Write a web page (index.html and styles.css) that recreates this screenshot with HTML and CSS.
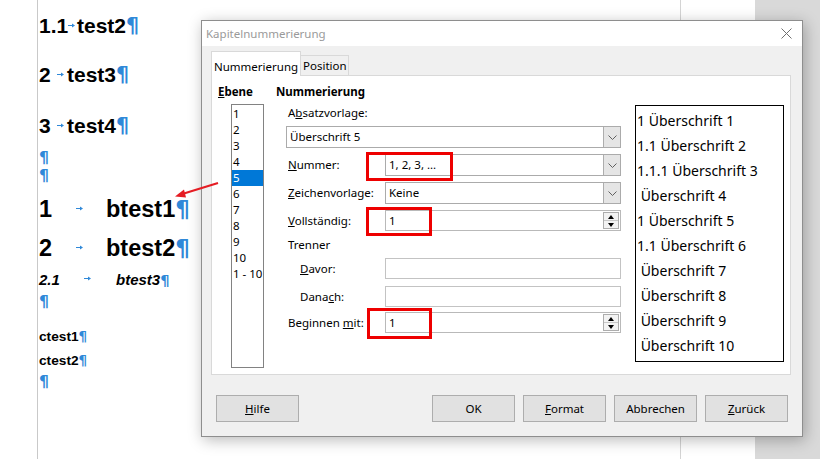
FILE: index.html
```html
<!DOCTYPE html>
<html lang="de">
<head>
<meta charset="utf-8">
<title>Kapitelnummerierung</title>
<link rel="stylesheet" href="styles.css">
</head>
<body>
<div class="screen">
  <div class="gutter"></div>
  <div class="doc">
    <p class="para big pa"><span class="num w-a">1.1</span><span class="tab w-ta"><svg class="arr" width="7" height="5" viewBox="0 0 7 5"><path d="M0 2.5H5.5" stroke="#2f88d8" stroke-width="1"/><path d="M4 0.5L7 2.5L4 4.5Z" fill="#2f88d8"/></svg></span>test2<span class="pil">¶</span></p>
    <p class="para big pb"><span class="num w-b">2</span><span class="tab w-tb"><svg class="arr" width="7" height="5" viewBox="0 0 7 5"><path d="M0 2.5H5.5" stroke="#2f88d8" stroke-width="1"/><path d="M4 0.5L7 2.5L4 4.5Z" fill="#2f88d8"/></svg></span>test3<span class="pil">¶</span></p>
    <p class="para big pc"><span class="num w-b">3</span><span class="tab w-tb"><svg class="arr" width="7" height="5" viewBox="0 0 7 5"><path d="M0 2.5H5.5" stroke="#2f88d8" stroke-width="1"/><path d="M4 0.5L7 2.5L4 4.5Z" fill="#2f88d8"/></svg></span>test4<span class="pil">¶</span></p>
    <p class="para empty p1"><span class="pil">¶</span></p>
    <p class="para empty p2"><span class="pil">¶</span></p>
    <p class="para bigger pd"><span class="num w-d">1</span><span class="tab w-td"><svg class="arr" width="7" height="5" viewBox="0 0 7 5"><path d="M0 2.5H5.5" stroke="#2f88d8" stroke-width="1"/><path d="M4 0.5L7 2.5L4 4.5Z" fill="#2f88d8"/></svg></span>btest1<span class="pil">¶</span></p>
    <p class="para bigger pe"><span class="num w-d">2</span><span class="tab w-td"><svg class="arr" width="7" height="5" viewBox="0 0 7 5"><path d="M0 2.5H5.5" stroke="#2f88d8" stroke-width="1"/><path d="M4 0.5L7 2.5L4 4.5Z" fill="#2f88d8"/></svg></span>btest2<span class="pil">¶</span></p>
    <p class="para ital pf"><span class="num w-f">2.1</span><span class="tab w-tf"><svg class="arr" width="7" height="5" viewBox="0 0 7 5"><path d="M0 2.5H5.5" stroke="#2f88d8" stroke-width="1"/><path d="M4 0.5L7 2.5L4 4.5Z" fill="#2f88d8"/></svg></span>btest3<span class="pil">¶</span></p>
    <p class="para empty p3"><span class="pil">¶</span></p>
    <p class="para small pg">ctest1<span class="pil">¶</span></p>
    <p class="para small ph">ctest2<span class="pil">¶</span></p>
    <p class="para empty p4"><span class="pil">¶</span></p>
  </div>
  <div class="pane"></div>
  <div class="grey"></div>

  <div class="dialog">
    <div class="titlebar">
      <span class="title">Kapitelnummerierung</span>
      <svg class="close" width="11" height="11" viewBox="0 0 11 11"><path d="M0.5 0.5L10.5 10.5M10.5 0.5L0.5 10.5" stroke="#6f6f6f" stroke-width="1" fill="none"/></svg>
    </div>
    <div class="dbody">
      <div class="tabs">
        <div class="tabitem active">Nummerierung</div>
        <div class="tabitem">Position</div>
      </div>
      <div class="panel">
        <div class="col-level">
          <div class="heading"><u>E</u>bene</div>
          <ul class="levels">
            <li>1</li><li>2</li><li>3</li><li>4</li><li class="sel">5</li><li>6</li><li>7</li><li>8</li><li>9</li><li>10</li><li>1 - 10</li>
          </ul>
        </div>
        <div class="col-form">
          <div class="heading">Nummerierung</div>
          <div class="lbl-line">A<u>b</u>satzvorlage:</div>
          <div class="combo wide"><span class="val">Überschrift 5</span><span class="drop"><svg width="9" height="5" viewBox="0 0 9 5"><path d="M0.5 0.5L4.5 4.5L8.5 0.5" stroke="#606060" fill="none"/></svg></span></div>
          <div class="frow r-num">
            <span class="lbl"><u>N</u>ummer:</span>
            <div class="field">
              <div class="combo"><span class="val">1, 2, 3, ...</span><span class="drop"><svg width="9" height="5" viewBox="0 0 9 5"><path d="M0.5 0.5L4.5 4.5L8.5 0.5" stroke="#606060" fill="none"/></svg></span></div>
              <div class="mark m-num"></div>
            </div>
          </div>
          <div class="frow r-zei">
            <span class="lbl"><u>Z</u>eichenvorlage:</span>
            <div class="field">
              <div class="combo"><span class="val">Keine</span><span class="drop"><svg width="9" height="5" viewBox="0 0 9 5"><path d="M0.5 0.5L4.5 4.5L8.5 0.5" stroke="#606060" fill="none"/></svg></span></div>
            </div>
          </div>
          <div class="frow r-voll">
            <span class="lbl"><u>V</u>ollständig:</span>
            <div class="field">
              <div class="spin"><span class="val">1</span><span class="spinbtn"><span class="up"></span><span class="down"></span></span></div>
              <div class="mark m-voll"></div>
            </div>
          </div>
          <div class="lbl-line trenner">Trenner</div>
          <div class="frow r-davor">
            <span class="lbl sub"><u>D</u>avor:</span>
            <div class="field"><div class="input"></div></div>
          </div>
          <div class="frow r-danach">
            <span class="lbl sub">Dana<u>c</u>h:</span>
            <div class="field"><div class="input"></div></div>
          </div>
          <div class="frow r-beg">
            <span class="lbl">Beginnen <u>m</u>it:</span>
            <div class="field">
              <div class="spin"><span class="val">1</span><span class="spinbtn"><span class="up"></span><span class="down"></span></span></div>
              <div class="mark m-beg"></div>
            </div>
          </div>
        </div>
        <div class="preview">
          <div>1 Überschrift 1</div>
          <div>1.1 Überschrift 2</div>
          <div>1.1.1 Überschrift 3</div>
          <div>&nbsp;Überschrift 4</div>
          <div>1 Überschrift 5</div>
          <div>1.1 Überschrift 6</div>
          <div>&nbsp;Überschrift 7</div>
          <div>&nbsp;Überschrift 8</div>
          <div>&nbsp;Überschrift 9</div>
          <div>&nbsp;Überschrift 10</div>
        </div>
      </div>
      <div class="buttons">
        <button class="btn"><u>H</u>ilfe</button>
        <span class="spacer"></span>
        <button class="btn">OK</button>
        <button class="btn"><u>F</u>ormat</button>
        <button class="btn">Abbrechen</button>
        <button class="btn"><u>Z</u>urück</button>
      </div>
    </div>
  </div>

  <svg class="callout" width="60" height="30" viewBox="0 0 60 30">
    <path d="M45 6L6 18" stroke="#e51c23" stroke-width="2" fill="none"/>
    <path d="M2 19.5L11 12.5L13 20.5Z" fill="#e51c23"/>
  </svg>
</div>
</body>
</html>
```

FILE: styles.css
```css
* { box-sizing: border-box; }
html, body { margin: 0; padding: 0; }
body { background: #fff; }

.screen {
  position: relative;
  width: 820px;
  height: 459px;
  overflow: hidden;
  display: flex;
  background: #fff;
}

.gutter { width: 37px; flex: none; }
.doc {
  width: 643px;
  flex: none;
  border-left: 1px solid #c9c9c9;
  padding-left: 1px;
  font-family: "Liberation Sans", Arial, sans-serif;
  font-weight: bold;
  color: #000;
}
.pane { width: 75px; flex: none; border-left: 1px solid #d4d4d4; }
.grey { flex: 1; background: #d9d9d9; }

.para { margin: 0; white-space: nowrap; }
.num, .tab { display: inline-block; }
.arr { vertical-align: 0.25em; display: inline-block; }
.pil {
  color: #2f88d8;
  font-family: "DejaVu Sans", sans-serif;
  font-weight: bold;
  font-style: normal;
  font-size: 0.98em;
}

.big { font-size: 21px; line-height: 26px; height: 26px; }
.bigger { font-size: 23.5px; line-height: 28px; height: 28px; }
.ital { font-size: 15px; font-style: italic; line-height: 20px; height: 20px; }
.small { font-size: 13.7px; line-height: 18px; height: 18px; }
.empty { font-size: 16px; line-height: 18px; height: 18px; }

.w-a { width: 29px; }
.w-ta { width: 9px; }
.w-b { width: 18px; }
.w-tb { width: 10px; }
.w-d { width: 37px; }
.w-td { width: 30px; }
.w-f { width: 45px; }
.w-tf { width: 32px; }

.pa { margin-top: 13px; }
.pb { margin-top: 23px; }
.pc { margin-top: 25px; }
.p1 { margin-top: 10px; }
.p2 { margin-top: 0; }
.pd { margin-top: 10px; }
.pe { margin-top: 11px; }
.pf { margin-top: 8px; }
.p3 { margin-top: 3px; }
.pg { margin-top: 17px; }
.ph { margin-top: 6px; }
.p4 { margin-top: 3px; }

/* dialog window */
.dialog {
  position: absolute;
  left: 201px;
  top: 20px;
  width: 602px;
  height: 417px;
  border: 1px solid #8e8e8e;
  background: #f0f0f0;
  box-shadow: 2px 3px 14px rgba(0,0,0,0.28);
  font-family: "Noto Sans", "Open Sans", sans-serif;
  font-size: 11.5px;
  color: #000;
  display: flex;
  flex-direction: column;
}
.titlebar {
  height: 25px;
  background: #fff;
  display: flex;
  align-items: center;
  justify-content: space-between;
  padding: 0 10px 0 4px;
}
.title { color: #9a9a9a; font-size: 11.5px; line-height: 16px; }
.close { display: block; }

.dbody { padding: 6px 10px 0 9px; display: flex; flex-direction: column; }

.tabs { display: flex; align-items: flex-end; height: 24px; margin-bottom: -1px; position: relative; z-index: 1; }
.tabitem {
  border: 1px solid #d9d9d9;
  line-height: 17px;
  white-space: nowrap;
}
.tabitem.active {
  background: #fff;
  height: 25px;
  border-bottom: none;
  padding: 6px 2px 0 2px;
  width: 90px;
}
.tabitem:not(.active) {
  background: #f0f0f0;
  height: 20px;
  border-left: none;
  border-bottom: none;
  padding: 1px 1px 0 2px;
  width: 48px;
  margin-bottom: 1px;
}

.panel {
  width: 580px;
  height: 300px;
  background: #fff;
  border: 1px solid #d9d9d9;
  display: flex;
  padding: 8px 6px 0 6px;
}
.heading { font-weight: bold; line-height: 16px; height: 16px; white-space: nowrap; }
.col-level { width: 58px; flex: none; }
.levels {
  list-style: none;
  margin: 4px 0 0 13px;
  padding: 1px 0 0 0;
  width: 33px;
  height: 264px;
  border: 1px solid #828282;
  background: #fff;
}
.levels li { line-height: 16px; height: 16px; padding-left: 1px; white-space: nowrap; }
.levels li.sel { background: #0078d7; color: #fff; }

.col-form { width: 345px; flex: none; }
.lbl-line { padding-left: 12px; line-height: 16px; height: 16px; margin-top: 5px; }
.lbl-line.trenner { margin-top: 6px; }

.combo, .spin, .input {
  height: 100%;
  background: #fff;
  border: 1px solid #ababab;
  display: flex;
  align-items: center;
}
.combo.wide { margin: 5px 0 0 10px; height: 22px; width: 335px; }
.val { flex: 1; padding-left: 3px; line-height: 16px; white-space: nowrap; }
.drop {
  width: 17px;
  height: 100%;
  background: #e5e5e5;
  border-left: 1px solid #adadad;
  display: flex;
  align-items: center;
  justify-content: center;
}
.input { border-color: #c3c3c3; }
.spin { border-color: #b9b9b9; }
.spinbtn {
  width: 16px;
  height: 17px;
  margin-right: 1px;
  border: 1px solid #adadad;
  background: #f3f3f3;
  display: flex;
  flex-direction: column;
}
.spinbtn .up, .spinbtn .down {
  flex: 1;
  display: flex;
  align-items: center;
  justify-content: center;
}
.spinbtn .up { border-bottom: 1px solid #c8c8c8; }
.spinbtn .up::before {
  content: "";
  border-left: 3.5px solid transparent;
  border-right: 3.5px solid transparent;
  border-bottom: 4px solid #000;
}
.spinbtn .down::before {
  content: "";
  border-left: 3.5px solid transparent;
  border-right: 3.5px solid transparent;
  border-top: 4px solid #000;
}

.frow {
  display: grid;
  grid-template-columns: 109px 236px;
  align-items: center;
}
.lbl { padding-left: 12px; line-height: 16px; white-space: nowrap; }
.lbl.sub { padding-left: 24px; }
.field { position: relative; height: 100%; }
.r-num { margin-top: 6px; height: 22px; }
.r-zei { margin-top: 6px; height: 22px; }
.r-voll { margin-top: 6px; height: 21px; }
.r-davor { margin-top: 5px; height: 21px; }
.r-danach { margin-top: 7px; height: 21px; }
.r-beg { margin-top: 5px; height: 21px; }

.mark { position: absolute; border: 3px solid #ee0000; }
.m-num { left: -19px; top: -2px; width: 87px; height: 29px; }
.m-voll { left: -19px; top: -3px; width: 66px; height: 29px; }
.m-beg { left: -18px; top: -4px; width: 65px; height: 31px; }

.preview {
  margin: 21px 0 0 14px;
  width: 150px;
  height: 257px;
  border: 1px solid #000;
  background: #fff;
  padding: 2px 0 0 1px;
  font-size: 14px;
  line-height: 25px;
  white-space: nowrap;
}

.buttons { display: flex; gap: 8px; margin-top: 20px; padding: 0 4px 0 5px; }
.spacer { flex: 1; }
.btn {
  width: 83px;
  height: 27px;
  background: #e1e1e1;
  border: 1px solid #adadad;
  font-family: inherit;
  font-size: 11.5px;
  color: #000;
  padding: 0;
}

.callout { position: absolute; left: 173px; top: 177px; }
```
